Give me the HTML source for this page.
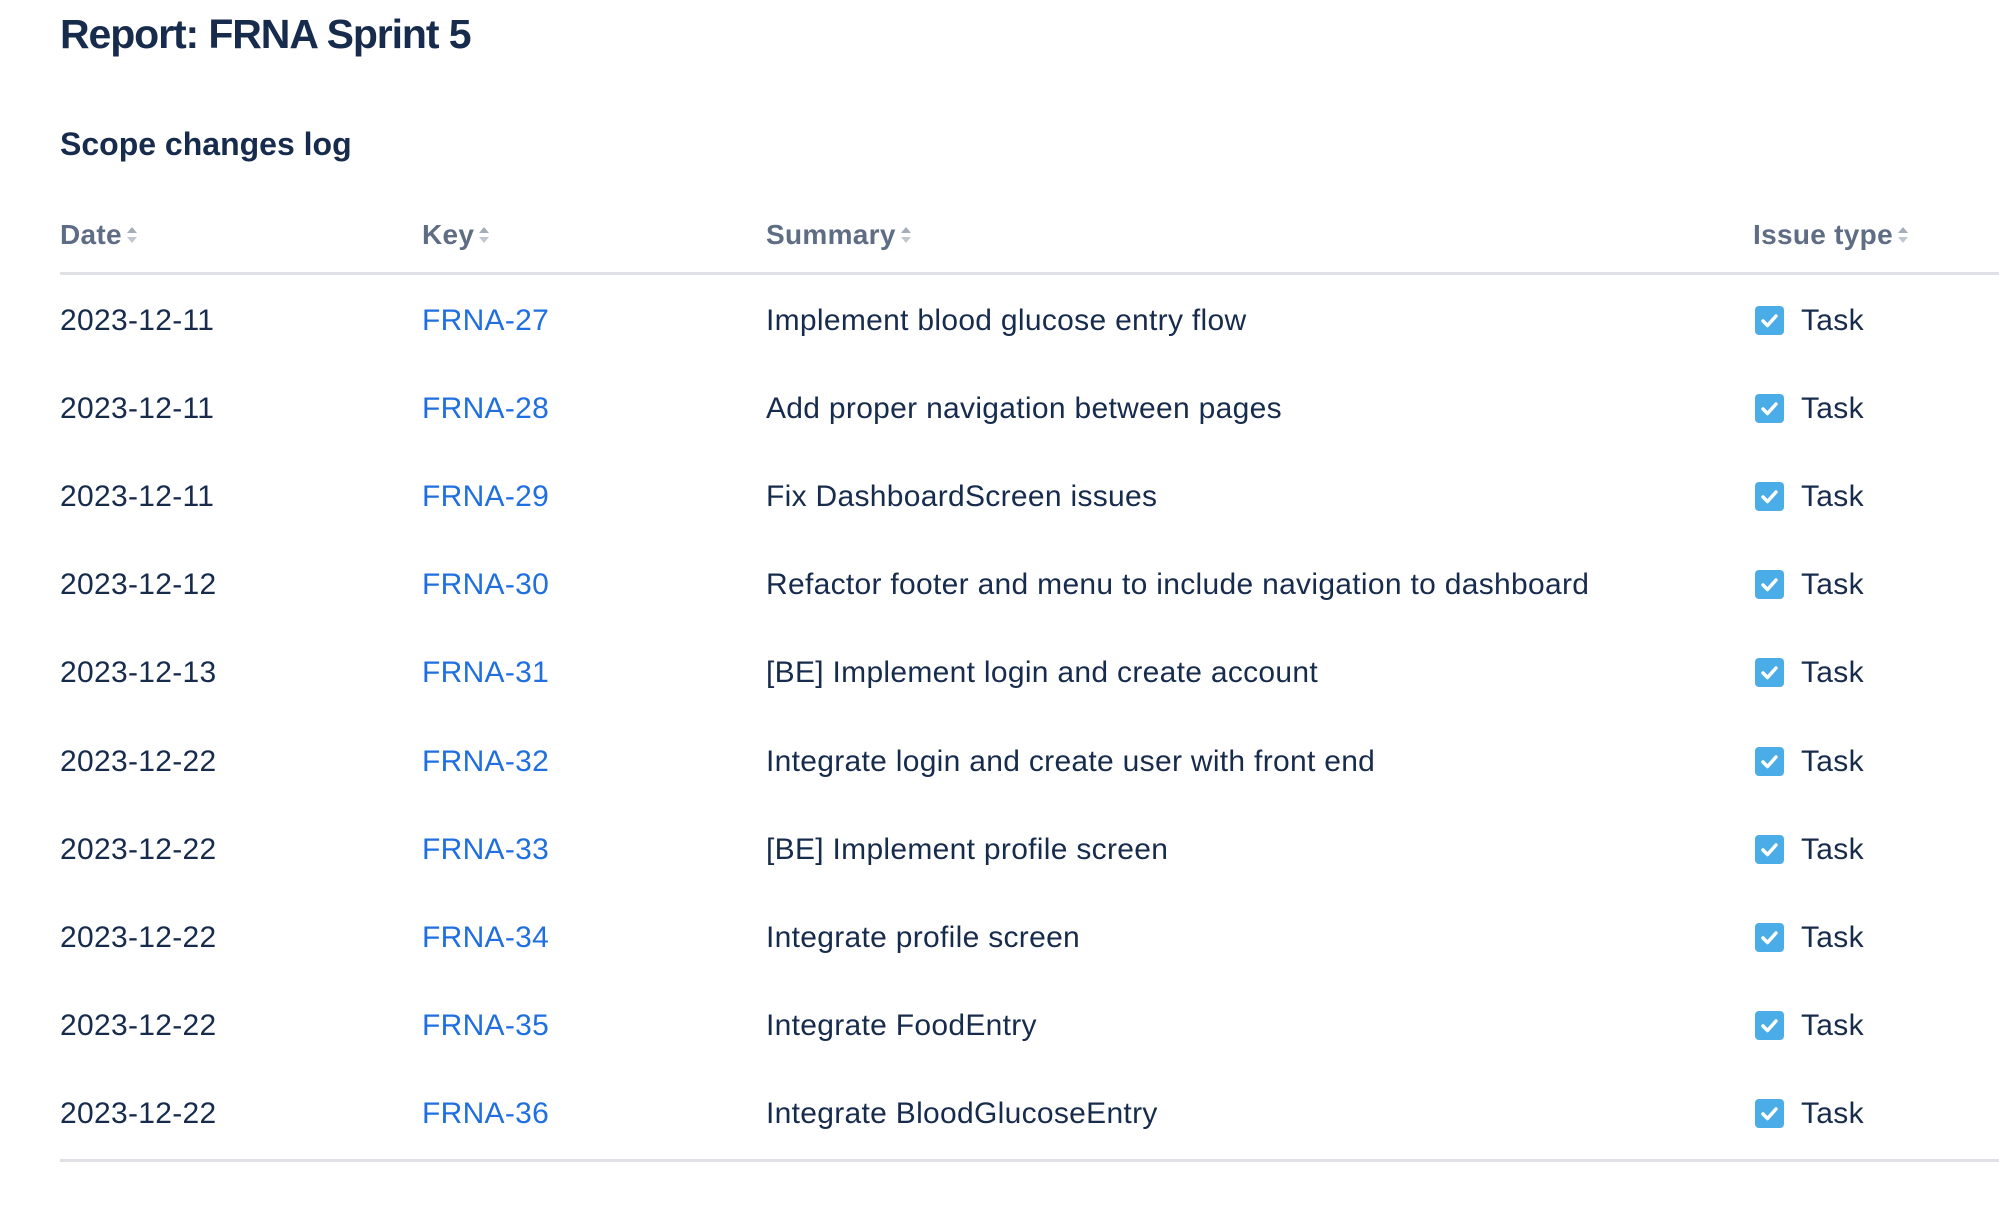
<!DOCTYPE html>
<html><head><meta charset="utf-8"><style>
body{margin:0;width:1999px;height:1232px;background:#fff;font-family:"Liberation Sans",Arial,sans-serif;color:#172b4d;position:relative;overflow:hidden}
h1{position:absolute;left:60px;top:11px;margin:0;font-size:41px;font-weight:bold;letter-spacing:-1.1px;white-space:nowrap}
h2{position:absolute;left:60px;top:126px;margin:0;font-size:32px;font-weight:bold;letter-spacing:0px;white-space:nowrap}
.th{position:absolute;top:219px;font-size:28px;font-weight:bold;color:#5e6c84;letter-spacing:0.3px;white-space:nowrap}
.s{display:inline-block;vertical-align:middle;margin-left:4px;width:12px;height:20px;position:relative;top:-2px}
.s:before,.s:after{content:"";position:absolute;left:1px;border-left:5px solid transparent;border-right:5px solid transparent}
.s:before{top:2px;border-bottom:6px solid #a5adba}
.s:after{bottom:2px;border-top:6px solid #c1c7d0}
.line{position:absolute;left:60px;right:0;height:3px;background:#dfe1e6}
.r{position:absolute;font-size:30px;line-height:40px;letter-spacing:0.3px;white-space:nowrap}
.k{color:#1f6fe0}
.cb{position:absolute;width:29px;height:29px;border-radius:4px;background:#4bade8}
</style></head><body>
<h1>Report: FRNA Sprint 5</h1>
<h2>Scope changes log</h2>
<div class="th" style="left:60px">Date<span class="s"></span></div>
<div class="th" style="left:422px">Key<span class="s"></span></div>
<div class="th" style="left:766px">Summary<span class="s"></span></div>
<div class="th" style="left:1753px">Issue type<span class="s"></span></div>
<div class="line" style="top:272px"></div>
<div class="line" style="top:1159px"></div>
<div id="rows"></div>
<script>
var d=[["2023-12-11","FRNA-27","Implement blood glucose entry flow"],["2023-12-11","FRNA-28","Add proper navigation between pages"],["2023-12-11","FRNA-29","Fix DashboardScreen issues"],["2023-12-12","FRNA-30","Refactor footer and menu to include navigation to dashboard"],["2023-12-13","FRNA-31","[BE] Implement login and create account"],["2023-12-22","FRNA-32","Integrate login and create user with front end"],["2023-12-22","FRNA-33","[BE] Implement profile screen"],["2023-12-22","FRNA-34","Integrate profile screen"],["2023-12-22","FRNA-35","Integrate FoodEntry"],["2023-12-22","FRNA-36","Integrate BloodGlucoseEntry"]];
var h="";d.forEach(function(r,i){var c=321+i*88.1,t=c-20;
h+='<div class="r" style="left:60px;top:'+t+'px">'+r[0]+'</div><div class="r k" style="left:422px;top:'+t+'px">'+r[1]+'</div><div class="r" style="left:766px;top:'+t+'px">'+r[2]+'</div><div class="cb" style="left:1755px;top:'+(c-15)+'px"><svg width="29" height="29" viewBox="0 0 29 29"><path d="M8 15l4.5 4.5L21 10" fill="none" stroke="#fff" stroke-width="3.5" stroke-linecap="round" stroke-linejoin="round"/></svg></div><div class="r" style="left:1801px;top:'+t+'px">Task</div>';});
document.getElementById("rows").innerHTML=h;
</script>
</body></html>
